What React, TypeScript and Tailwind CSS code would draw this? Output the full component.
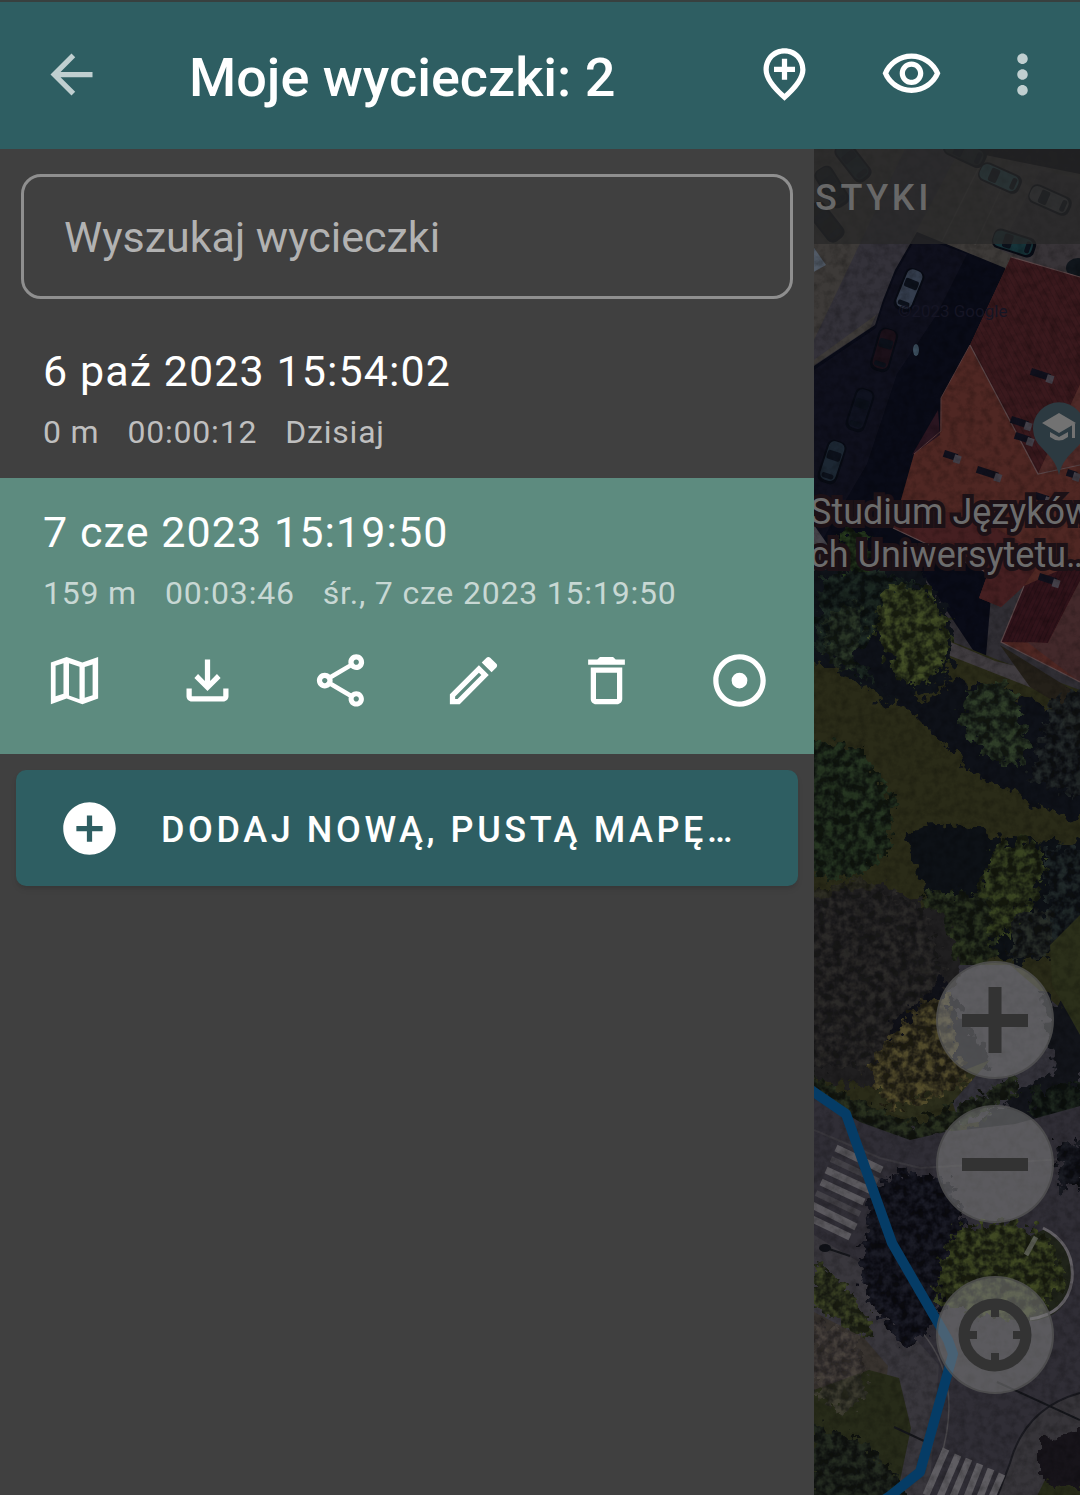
import type { ReactNode } from "react";

const ICONS = {
  back: "M20 11H7.83l5.59-5.59L12 4l-8 8 8 8 1.41-1.41L7.83 13H20v-2z",
  addPlace:
    "M13 6v3h3v2h-3v3h-2v-3H8V9h3V6h2zm5 4.2C18 6.57 15.35 4 12 4s-6 2.57-6 6.2c0 2.34 1.95 5.44 6 9.14 4.05-3.7 6-6.8 6-9.14zM12 2c4.2 0 8 3.22 8 8.2 0 3.32-2.67 7.25-8 11.8-5.33-4.55-8-8.48-8-11.8C4 5.22 7.8 2 12 2z",
  eye: "M12 6c3.79 0 7.17 2.13 8.82 5.5C19.17 14.87 15.79 17 12 17s-7.17-2.13-8.82-5.5C4.83 8.13 8.21 6 12 6m0-2C7 4 2.73 7.11 1 11.5 2.73 15.89 7 19 12 19s9.27-3.11 11-7.5C21.27 7.11 17 4 12 4zm0 5c1.38 0 2.5 1.12 2.5 2.5S13.38 14 12 14s-2.5-1.12-2.5-2.5S10.62 9 12 9m0-2c-2.48 0-4.5 2.02-4.5 4.5S9.52 16 12 16s4.5-2.02 4.5-4.5S14.48 7 12 7z",
  more: "M12 8c1.1 0 2-.9 2-2s-.9-2-2-2-2 .9-2 2 .9 2 2 2zm0 2c-1.1 0-2 .9-2 2s.9 2 2 2 2-.9 2-2-.9-2-2-2zm0 6c-1.1 0-2 .9-2 2s.9 2 2 2 2-.9 2-2-.9-2-2-2z",
  map: "M3 5.1 9 3l6 2.1L21 3v15.9L15 21l-6-2.1L3 21V5.1zM4.8 6.4V18l3-1V5.4l-3 1zM9.900 5.400v12.300l4 1.400V6.800L9.900 5.400zm6 1.500v11.700l3-1V5.900l-3 1z",
  download:
    "M12 16 7 11l1.400-1.450L11 12.150V4h2v8.150l2.600-2.600L17 11l-5 5zM6 20c-1.100 0-2-.9-2-2v-3h2v3h12v-3h2v3c0 1.100-.9 2-2 2H6z",
  share:
    "M18 16.080c-.76 0-1.440.3-1.960.77L8.910 12.700c.05-.23.09-.46.09-.7s-.04-.47-.09-.7l7.050-4.110c.54.5 1.250.81 2.040.81 1.660 0 3-1.340 3-3s-1.340-3-3-3-3 1.340-3 3c0 .24.04.47.09.7L8.040 9.810C7.500 9.310 6.790 9 6 9c-1.660 0-3 1.340-3 3s1.340 3 3 3c.79 0 1.500-.31 2.040-.81l7.120 4.160c-.05.21-.08.43-.08.65 0 1.610 1.310 2.920 2.920 2.920s2.920-1.310 2.920-2.920-1.310-2.920-2.920-2.920zM18 4c.55 0 1 .45 1 1s-.45 1-1 1-1-.45-1-1 .45-1 1-1zM6 13c-.55 0-1-.45-1-1s.45-1 1-1 1 .45 1 1-.45 1-1 1zm12 7.020c-.55 0-1-.45-1-1s.45-1 1-1 1 .45 1 1-.45 1-1 1z",
  edit: "M14.060 9.020l.92.92L5.920 19H5v-.92l9.060-9.060M17.660 3c-.25 0-.51.1-.7.29l-1.830 1.830 3.750 3.750 1.830-1.830c.39-.39.39-1.020 0-1.410l-2.340-2.340c-.2-.2-.45-.29-.71-.29zm-3.600 3.190L3 17.250V21h3.750L17.810 9.940l-3.750-3.750z",
  trash:
    "M16 9v10H8V9h8m-1.500-6h-5l-1 1H5v2h14V4h-3.500l-1-1zM18 7H6v12c0 1.100.9 2 2 2h8c1.100 0 2-.9 2-2V7z",
  record:
    "M12 2C6.480 2 2 6.480 2 12s4.480 10 10 10 10-4.480 10-10S17.520 2 12 2zm0 18c-4.420 0-8-3.580-8-8s3.580-8 8-8 8 3.580 8 8-3.580 8-8 8zm0-11a3 3 0 1 0 0 6 3 3 0 0 0 0-6z",
  addCircle:
    "M12 2C6.480 2 2 6.480 2 12s4.480 10 10 10 10-4.480 10-10S17.520 2 12 2zm5 11h-4v4h-2v-4H7v-2h4V7h2v4h4v2z",
};

function Icon({ path }: { path: string }) {
  return (
    <svg viewBox="0 0 24 24" className="size-[63px] shrink-0 fill-current" aria-hidden="true">
      <path d={path} fillRule="evenodd" />
    </svg>
  );
}

function IconButton({ label, path }: { label: string; path: string }) {
  return (
    <button type="button" aria-label={label} className="shrink-0">
      <Icon path={path} />
    </button>
  );
}

function Trip({ title, details, selected, children }: { title: string; details: string[]; selected?: boolean; children?: ReactNode }) {
  return (
    <li className={selected ? "bg-[#5d8b7f] px-[43px] pt-6 pb-[42px]" : "px-[43px] pt-6 pb-[15px]"}>
      <h2 className="text-[43px] leading-[60px] tracking-wide text-white">{title}</h2>
      <p
        className={
          selected
            ? "flex gap-7 text-[32px] leading-[62px] tracking-wide text-[#c8d8d4]"
            : "flex gap-7 text-[32px] leading-[62px] tracking-wide text-[#bfbfbf]"
        }
      >
        {details.map((d) => (
          <span key={d}>{d}</span>
        ))}
      </p>
      {children}
    </li>
  );
}

function Stripes({ lines, width, color }: { lines: number[][]; width: number; color: string }) {
  return (
    <g stroke={color} strokeWidth={width}>
      {lines.map(([x1, y1, x2, y2], i) => (
        <line key={i} x1={x1} y1={y1} x2={x2} y2={y2} />
      ))}
    </g>
  );
}

function Car({ x, y, r, body, glass = "#0c111b" }: { x: number; y: number; r: number; body: string; glass?: string }) {
  return (
    <g transform={`translate(${x} ${y}) rotate(${r})`}>
      <rect x="-10" y="-22" width="20" height="44" rx="7" fill="#080b14" />
      <rect x="-8" y="-21" width="16" height="40" rx="6" fill={body} />
      <rect x="-7" y="-11" width="14" height="9" rx="2" fill={glass} />
      <rect x="-6" y="12" width="12" height="5" rx="2" fill={glass} />
    </g>
  );
}

function Satellite() {
  return (
    <svg
      viewBox="814 149 266 1346"
      preserveAspectRatio="xMinYMin slice"
      className="absolute inset-0 h-full w-full"
      aria-hidden="true"
    >
      <defs>
        <filter id="leaf" x="-20%" y="-20%" width="140%" height="140%" colorInterpolationFilters="sRGB">
          <feTurbulence type="fractalNoise" baseFrequency="0.12" numOctaves="3" seed="7" result="n" />
          <feDisplacementMap in="SourceGraphic" in2="n" scale="26" xChannelSelector="R" yChannelSelector="G" result="d" />
          <feColorMatrix in="n" values="0 0 0 3 -1.1  0 0 0 3 -1.1  0 0 0 2.6 -0.8  0 0 0 0 1" result="m" />
          <feComposite in="d" in2="m" operator="arithmetic" k1="0.6" k2="0.35" result="c" />
          <feComposite in="c" in2="d" operator="in" />
        </filter>
        <filter id="rough" x="-10%" y="-10%" width="120%" height="120%" colorInterpolationFilters="sRGB">
          <feTurbulence type="fractalNoise" baseFrequency="0.08" numOctaves="3" seed="3" result="n" />
          <feDisplacementMap in="SourceGraphic" in2="n" scale="24" xChannelSelector="R" yChannelSelector="G" />
        </filter>
        <filter id="grain" x="0" y="0" width="100%" height="100%" colorInterpolationFilters="sRGB">
          <feTurbulence type="fractalNoise" baseFrequency="0.12" numOctaves="4" seed="11" />
          <feColorMatrix values="0 0 0 0 0  0 0 0 0 0  0 0 0 0 0  0 0 0 1.6 -0.62" />
        </filter>
        <pattern id="tilesDark" width="5" height="5" patternUnits="userSpaceOnUse" patternTransform="rotate(-28)">
          <rect width="5" height="5" fill="#3a191d" />
          <rect width="1" height="5" fill="#32161a" />
        </pattern>
        <pattern id="tilesWing" width="4" height="4" patternUnits="userSpaceOnUse" patternTransform="rotate(25)">
          <rect width="4" height="4" fill="#31131a" />
          <rect width="1" height="4" fill="#281017" />
        </pattern>
      </defs>

      <rect x="814" y="149" width="266" height="1346" fill="#302e34" />

      {/* parking lot */}
      <path d="M814 149h266v170L917 232 895 270 883 300 870 328 814 365z" fill="#3d3a38" />
      <path d="M905 149h55L900 262l-20 50-66 48v-20z" fill="#34323a" />
      <path d="M1040 150 1080 215v60l-80-35-20-60z" fill="#403c3d" />
      <path d="M955 149h125v25l-70-14z" fill="#0c0c12" />
      <path d="M1080 180 1040 170 1000 250 1080 285z" fill="#383438" />
      <path d="M812 245l14 20-14 8z" fill="#515a66" />
      <path d="M980 165l-40 80M1010 170l-35 75" stroke="#4a4745" strokeWidth="1.500" />
      <Car x={853} y={162} r={-38} body="#111e25" />
      <Car x={832} y={187} r={-32} body="#12181d" />
      <Car x={826} y={222} r={-38} body="#0e1114" />
      <Car x={965} y={152} r={-65} body="#181f24" />
      <Car x={1000} y={178} r={-66} body="#2a5058" />
      <Car x={1050} y={200} r={-66} body="#434549" />
      <Car x={1014} y={243} r={-72} body="#16343a" />
      <ellipse cx="1078" cy="268" rx="12" ry="10" fill="#10161c" />

      {/* building shadow */}
      <path d="M917 232l88 36v160l-20 240-60-90-50 30-61-45V366l61-41 8-25 12-30z" fill="#090b17" />
      <path d="M917 236l50 18-30 60-40 60-30 90-53 90V370l62-42 8-25 12-30z" fill="#121321" opacity=".7" />
      <Car x={909} y={290} r={22} body="#343d4d" />
      <Car x={884} y={350} r={16} body="#1b1019" />
      <Car x={860} y={410} r={18} body="#0f121f" />
      <Car x={832} y={462} r={18} body="#1c2733" />
      <ellipse cx="916" cy="350" rx="3" ry="6" fill="#3b4e5e" />

      {/* red roof */}
      <path d="M1011 257 970 345 941 398 940 432 914 454 893 528 988 573 979 598 1001 607 1024 586 1001 642 1080 682V277z" fill="#4f2723" />
      <path d="M1011 257 970 345 1038 474 1080 385V277z" fill="url(#tilesDark)" />
      <path d="M1080 385 1038 474 1080 465z" fill="#4f2a28" />
      <path d="M938 410 912 455l28-20z" fill="#2a1520" />
      <path d="M893 528l95 45-9 25 22 9 23-21 20-30-60-35-80-20z" fill="#451f21" />
      <path d="M1024 586l56-25v20l-32 62-47-1z" fill="url(#tilesWing)" />
      <path d="M1048 643l32-62v101l-53-40z" fill="#43292b" />
      <path d="M970 345l68 129 42-9M1011 257l69 20M893 528l95 45M1024 586l-23 56 79 40" fill="none" stroke="#5c484a" strokeWidth="1.200" />
      <path d="M970 345l-29 53v33l-27 23" fill="none" stroke="#573a3a" />
      {[
        [1032, 368, 20], [1012, 416, 18], [1016, 432, 16], [945, 450, 14], [978, 466, 22], [1068, 469, 10], [1036, 492, 14], [1030, 545, 22], [1040, 573, 18],
      ].map(([x, y, w], i) => (
        <g key={i} transform={`rotate(18 ${x} ${y})`}>
          <rect x={x} y={y} width={w} height="7" fill="#10101c" />
          <rect x={x + w - 3} y={y + 1} width="7" height="8" fill="#444049" />
        </g>
      ))}

      {/* park */}
      <path d="M814 655l70 20 64-35 50 20 82 30v410l-40 20-80 12-146-20z" fill="#2a2b18" />
      <path d="M814 525l14 20-2 32-12-5z" fill="#46444a" />
      <path d="M948 641l47 20 50 12 35 30-30-8-102-40z" fill="#403c40" />
      <path d="M1000 645l80 50v22l-50-30z" fill="#242019" />
      <g filter="url(#rough)">
        <path d="M806 575l60-20 60 20 30 60-10 50-60 20-40-30-40-15z" fill="#0f1319" />
      </g>
      <g filter="url(#leaf)">
        <path d="M820 580l50-15 50 20 20 40-10 50-60 10-20-20-36-15z" fill="#1f2b24" />
        <path d="M885 585l45 5 20 40-4 36-26 20-40-5-8-40z" fill="#455026" />
        <path d="M840 528l28 6 6 34-30 4z" fill="#2a3f1f" />
        <path d="M825 620l25-20 15 20-12 55-28-20z" fill="#2e3b29" />
      </g>
      <g filter="url(#rough)">
        <path d="M850 660l28-30 15 45 30 25 30-20 60 10 50 30 35 60v48l-50-18-70-34-45-40-45-45z" fill="#0e1118" />
        <path d="M905 830l45-7 45 14 90 5v100l-60 20-60-10-50-80z" fill="#0d1116" />
      </g>
      <g filter="url(#leaf)">
        <path d="M965 690l45-10 20 60-10 28-30-8-30-35z" fill="#32422a" />
        <path d="M1050 700l40-15v115l-60-20z" fill="#252b2a" />
        <path d="M804 738l55 10 35 50-5 55-35 25-50-2z" fill="#263722" />
        <path d="M995 845l40-8 10 30-15 50-35 25-30-8 15-50z" fill="#3c4822" />
        <path d="M1045 850l45-5v100l-40-5z" fill="#222b2a" />
        <path d="M925 890l60 5 10 60-20 20-60-15z" fill="#2e3921" />
        <path d="M1015 910l40 5-5 40-40 5z" fill="#2a3029" />
      </g>
      <path d="M950 965l60 0 70 60v80l-120 20-30-90z" fill="#33323a" />
      <path d="M804 900l80-15 60 30 16 60-30 75-50 40-76-10z" fill="#201f20" filter="url(#rough)" />
      <g filter="url(#leaf)" opacity=".6">
        <path d="M804 890l60-10 60 30 20 60-30 60-50 40-70-5z" fill="#34322e" />
      </g>
      <g filter="url(#rough)">
        <path d="M892 1025l50-50 20 40 30 50-60 40-50 0z" fill="#101118" />
        <path d="M1040 990l45 30v110l-80 10-60 10 60-50 50-30z" fill="#12141a" />
      </g>
      <path d="M1052 985l28 50v-120l-30 30z" fill="#2b2f1a" />
      <path d="M880 1085l60-5 50-20-40 45-40 14-40-12z" fill="#2c2e1b" />
      <g filter="url(#leaf)">
        <path d="M925 1000l25-5 5 55 15 30-30 14-50 14-25-40z" fill="#564f2c" />
        <path d="M812 1075l50 28 50 20 60-24 45-25v20l-50 30-50 22-50-12-55-28z" fill="#2a3320" />
        <path d="M1030 1090l55-10v50l-50 8z" fill="#1f281e" />
      </g>

      {/* streets */}
      <path d="M814 1094l46 28 50 18 35-8 70-8 65-18v389H814z" fill="#302e36" />
      <path d="M814 1130l66 28 40 10 160-10" fill="none" stroke="#3a383e" strokeWidth="2" />
      <Stripes
        width={7}
        color="#5b595e"
        lines={[[836, 1148, 882, 1170], [826, 1170, 874, 1192], [821, 1182, 864, 1202], [812, 1205, 856, 1227], [812, 1219, 850, 1237]]}
      />
      <Stripes width={6} color="#434147" lines={[[831, 1159, 878, 1181], [816, 1193, 860, 1214]]} />
      <path d="M814 1235l50 30 30 50 45 50-10 130h-115z" fill="#39373d" />
      <path d="M920 1330q45 50 20 130l-15 35" fill="none" stroke="#49474b" strokeWidth="1.500" />
      <g filter="url(#leaf)">
        <path d="M870 1190l30-20 50 10 20 60-10 50-40 50-20 5-40-60z" fill="#1a1b26" />
        <path d="M1055 1145l30-5v45l-25 5z" fill="#1a1c24" />
      </g>
      <path d="M1045 1229q30 15 27 52-5 36-40 40l-30-2-20-60z" fill="#20241a" />
      <g filter="url(#leaf)">
        <path d="M955 1228l60-8 35 20 16 45-30 30-50 4-50-20 5-40z" fill="#414b23" />
        <path d="M812 1260l30 20 32 46-10 14-52-35z" fill="#3e4624" />
      </g>
      <path d="M1043 1228q32 16 29 52-5 34-42 39" fill="none" stroke="#646166" strokeWidth="3" />
      <path d="M1036 1237l-10 18" stroke="#5a5d52" strokeWidth="5" />
      <path d="M814 1312l50 26 24 28-5 40-69 60z" fill="#38332f" />
      <path d="M814 1390l55-20 30 8 12 50-14 67h-83z" fill="#272b19" />
      <g filter="url(#leaf)">
        <path d="M812 1425l50 15 35 35 5 30h-90z" fill="#252d22" />
      </g>
      <g filter="url(#leaf)" opacity=".5">
        <path d="M812 1320l45 15 10 60-25 20-30-30z" fill="#5a534c" />
      </g>
      <path d="M1080 1393q-55 15-70 70l-12 32h82z" fill="#37353a" />
      <path d="M1080 1393q-55 15-70 70l-12 32" fill="none" stroke="#1a1a20" strokeWidth="2" />
      <path d="M1050 1470l30 5v25h-45z" fill="#282c19" />
      <g filter="url(#rough)">
        <path d="M1040 1440l45-10v60l-45-10z" fill="#17141a" />
      </g>
      <Stripes
        width={7}
        color="#5f5d62"
        lines={[[946, 1449, 926, 1495], [958, 1455, 940, 1497], [969, 1459, 953, 1497], [980, 1464, 967, 1497], [991, 1469, 980, 1497], [1002, 1474, 992, 1497]]}
      />
      <path d="M826 1248l24 8M894 1427l30 14M997 1382l83 38" stroke="#15161b" strokeWidth="2" />
      <ellipse cx="825" cy="1248" rx="6" ry="4" fill="#101218" />
      <rect x="814" y="149" width="266" height="1346" filter="url(#grain)" opacity=".3" />

      <text x="898" y="317" fill="#151524" fontSize="17" fontFamily="Roboto, sans-serif">©2023 Google</text>

      {/* recorded track */}
      <path d="M808 1088l38 26 46 129 56 97 5 14-33 118-30 24-12 8" fill="none" stroke="#053c66" strokeWidth="10" strokeLinejoin="round" />

      {/* university marker */}
      <path d="M1059 475c-3-14-9-18-17-27a26 26 0 1 1 34 0c-8 9-14 13-17 27z" fill="#2c3a41" />
      <path d="M1059 413l17 10-17 10-17-10zM1050 432l9 5 9-5v5q-9 7-18 0zM1072 424h3v14h-3z" fill="#727272" />
    </svg>
  );
}

function MapButton({ label, children }: { label: string; children: ReactNode }) {
  return (
    <button type="button" aria-label={label} className="size-[118px] rounded-full border-2 border-[#444444]/60 bg-[#808080]/55">
      <svg viewBox="0 0 114 114" className="size-full" fill="#333333" aria-hidden="true">
        {children}
      </svg>
    </button>
  );
}

export default function App() {
  return (
    <div className="flex min-h-screen flex-col bg-[#404040] font-['Roboto',sans-serif]">
      <header className="flex h-[149px] items-center border-t-2 border-[#38403f] bg-[#2e5e62] pr-[26px] pb-0.5 pl-10 text-white">
        <div className="flex text-[#c0cfd0]">
          <IconButton label="Wstecz" path={ICONS.back} />
        </div>
        <h1 className="ml-[86px] min-w-0 flex-1 truncate pt-1.5 text-[54px] leading-[72px] font-medium">Moje wycieczki: 2</h1>
        <div className="flex items-center gap-16">
          <IconButton label="Dodaj miejsce" path={ICONS.addPlace} />
          <IconButton label="Pokaż" path={ICONS.eye} />
        </div>
        <div className="ml-12 flex text-[#c0cfd0]">
          <IconButton label="Więcej opcji" path={ICONS.more} />
        </div>
      </header>

      <main className="grid flex-1 grid-cols-[814fr_266fr]">
        <section className="min-w-0">
          <div className="px-[21px] pt-[25px] pb-[18px]">
            <input
              type="search"
              aria-label="Wyszukaj wycieczki"
              placeholder="Wyszukaj wycieczki"
              className="h-[125px] w-full rounded-[20px] border-3 border-[#8f8f8f] bg-transparent px-10 text-[43px] text-white placeholder:text-[#b2b2b2] placeholder:opacity-100"
            />
          </div>
          <ul>
            <Trip title="6 paź 2023 15:54:02" details={["0 m", "00:00:12", "Dzisiaj"]} />
            <Trip title="7 cze 2023 15:19:50" details={["159 m", "00:03:46", "śr., 7 cze 2023 15:19:50"]} selected>
              <div className="mt-[25px] flex justify-between text-white">
                <IconButton label="Mapa" path={ICONS.map} />
                <IconButton label="Pobierz" path={ICONS.download} />
                <IconButton label="Udostępnij" path={ICONS.share} />
                <IconButton label="Edytuj" path={ICONS.edit} />
                <IconButton label="Usuń" path={ICONS.trash} />
                <IconButton label="Nagrywaj" path={ICONS.record} />
              </div>
            </Trip>
          </ul>
          <div className="p-4">
            <button
              type="button"
              className="flex h-[116px] w-full items-center gap-10 rounded-[10px] bg-[#2e5e62] px-[42px] text-left text-[36px] font-medium tracking-widest text-white shadow-md"
            >
              <Icon path={ICONS.addCircle} />
              <span className="pt-[3px] whitespace-nowrap">DODAJ NOWĄ, PUSTĄ MAPĘ…</span>
            </button>
          </div>
        </section>

        <section className="relative min-w-0 overflow-hidden bg-[#302e34]">
          <Satellite />
          <div className="relative flex h-[95px] items-center bg-[#282828]/75">
            <span className="pt-[3px] pl-px text-[36px] font-medium tracking-widest text-[#686868]">STYKI</span>
          </div>
          <p className="absolute top-[342px] -left-1 text-[36px] leading-[43px] whitespace-nowrap text-[#6c6c6c] [-webkit-text-stroke:8px_#1c1116] [paint-order:stroke_fill]">
            Studium Języków
            <br />
            ch Uniwersytetu…
          </p>
          <div className="absolute right-[26px] bottom-[101px] flex flex-col">
            <MapButton label="Przybliż">
              <path d="M24 51h26.500V24h13v27H90v13H63.500v26h-13V64H24z" />
            </MapButton>
            <div className="mt-[26px] mb-[53px] flex">
              <MapButton label="Oddal">
                <path d="M24 51h66v13H24z" />
              </MapButton>
            </div>
            <MapButton label="Moja lokalizacja">
              <circle cx="57" cy="57" r="31" fill="none" stroke="#333333" strokeWidth="11" />
              <path d="M53 28h8v11h-8zM53 75h8v11h-8zM28 53h11v8H28zM75 53h11v8H75z" />
            </MapButton>
          </div>
        </section>
      </main>
    </div>
  );
}
